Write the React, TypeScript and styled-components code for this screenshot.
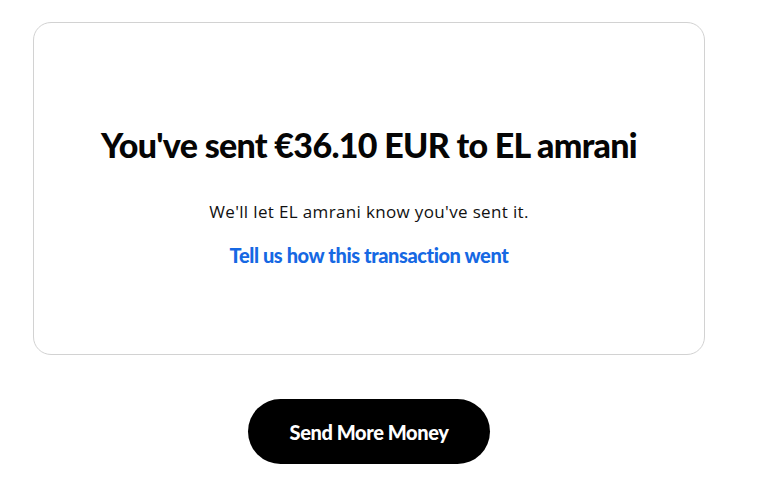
import React from "react";
import styled, { createGlobalStyle } from "styled-components";

const GlobalStyle = createGlobalStyle`
  html, body {
    margin: 0;
    padding: 0;
    background: #fff;
  }

  body {
    font-family: "Lato", "Liberation Sans", sans-serif;
    color: #000;
  }
`;

const Page = styled.div`
  width: 672px;
  padding: 22px 0 0 33px;
  display: flex;
  flex-direction: column;
  align-items: center;
`;

const Card = styled.div`
  box-sizing: border-box;
  width: 100%;
  height: 333px;
  border: 1px solid #d2d2d2;
  border-radius: 18px;
  padding-top: 102px;
  display: flex;
  flex-direction: column;
  align-items: center;
`;

const Title = styled.h1`
  margin: 0;
  font-family: "Lato", sans-serif;
  font-weight: 900;
  font-size: 34px;
  line-height: 40px;
  letter-spacing: -0.7px;
  color: #050505;
  white-space: nowrap;
`;

const Note = styled.p`
  margin: 35px 0 0;
  font-family: "Open Sans", "Liberation Sans", sans-serif;
  font-size: 17px;
  line-height: 24px;
  letter-spacing: 0.35px;
  color: #111;
`;

const FeedbackLink = styled.a`
  margin-top: 19px;
  font-family: "Lato", sans-serif;
  font-weight: 900;
  font-size: 20px;
  line-height: 24px;
  letter-spacing: -0.4px;
  color: #1668e3;
  text-decoration: none;
  cursor: pointer;
`;

const SendButton = styled.button`
  margin-top: 44px;
  width: 242px;
  height: 65px;
  border: none;
  border-radius: 33px;
  background: #000;
  color: #fff;
  font-family: "Lato", sans-serif;
  font-weight: 900;
  font-size: 20px;
  letter-spacing: -0.4px;
  cursor: pointer;
`;

export default function App() {
  return (
    <>
      <GlobalStyle />
      <Page>
        <Card>
          <Title>You've sent €36.10 EUR to EL amrani</Title>
          <Note>We'll let EL amrani know you've sent it.</Note>
          <FeedbackLink>Tell us how this transaction went</FeedbackLink>
        </Card>
        <SendButton>Send More Money</SendButton>
      </Page>
    </>
  );
}
